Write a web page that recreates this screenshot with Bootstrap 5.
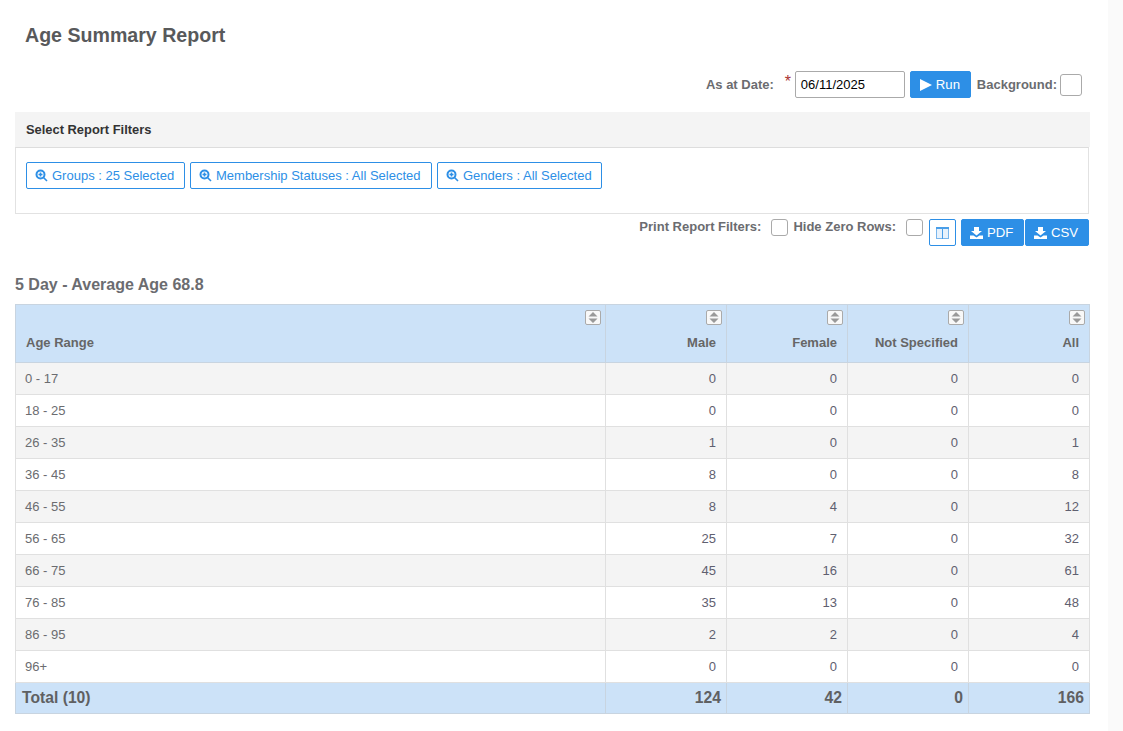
<!DOCTYPE html>
<html lang="en"><head><meta charset="utf-8"><title>Age Summary Report</title>
<link rel="stylesheet" href="https://cdn.jsdelivr.net/npm/bootstrap@5.3.0/dist/css/bootstrap.min.css">
<style>
html,body{height:731px;overflow:hidden}
body{font-family:"Liberation Sans",Arial,sans-serif;font-size:13px;color:#58595b;background:#fff}
.shell{width:1108px;height:731px;padding:0 18px 0 15px;box-sizing:border-box}
.track{width:15px;height:731px;background:#fafafa}
.page-title{font-size:19.6px;font-weight:700;color:#58595b;margin:0;padding:22px 0 0 10px;line-height:26px;height:71px}
.run-row{height:27px;padding-right:8px}
.lbl{font-size:13px;font-weight:700;color:#6b6c70;line-height:20px}
.req{color:#a33;font-size:16px;font-weight:400;margin:-6px 4px 0 11px;line-height:20px;width:6px}
.date-box{width:110px;height:27px;border:1px solid #aaa;border-radius:2px;padding:0 5px;font-size:13px;color:#000;line-height:25px}
.act{background:#2d8fe6;border:1px solid #2d8fe6;color:#fff;border-radius:2px;font-size:13.2px;height:27px;padding:0 8px;line-height:25px}
.act:hover{background:#2d8fe6;color:#fff;border-color:#2d8fe6}
.act svg{flex-shrink:0}
.box{width:22px;height:22px;border:1px solid #aaa;border-radius:3px;background:#fff;display:block}
.box.sm{width:17px;height:17px}
.filter-head{height:35px;margin-top:14px;background:#f4f4f4;font-weight:700;color:#333;line-height:35px;padding-left:11px;font-size:12.9px}
.filter-body{height:67px;width:1074px;border:1px solid #e2e2e2;border-top:1px solid #ddd;padding:14px 10px}
.chip{height:27px;border:1px solid #2d8fe6;border-radius:2px;background:#fff;color:#2d8fe6;font-size:13px;padding:0 0 0 8px;line-height:25px;white-space:nowrap;text-align:left}
.chip:hover{background:#fff;color:#2d8fe6;border-color:#2d8fe6}
.chip-a{width:159px}
.chip-b{width:242px}
.chip-c{width:165px}
.tool-row{height:33px;padding:5px 1px 0 0}
.tool-row .lbl{line-height:15px}
.col-btn{width:27px;height:27px;border:1px solid #2d8fe6;border-radius:2px;background:#fff;padding:0}
.sec-title{font-size:16px;font-weight:700;color:#6b6c70;margin:0;height:57px;padding-top:26px;line-height:24px}
.age-table{width:1074px;table-layout:fixed;border-collapse:collapse;margin:0;font-size:13px}
.age-table th,.age-table td{border:1px solid #e0e0e0;padding:0 10px 0 9px;text-align:right;color:#5f6070;font-weight:400;height:32px;box-shadow:none;vertical-align:middle}
.age-table td:first-child,.age-table th:first-child{text-align:left}
.age-table td:first-child{color:#6b6c70}
.age-table tbody tr:nth-child(odd) td{background:#f4f4f4}
.age-table tbody tr:nth-child(even) td{background:#fff}
.age-table thead th{background:#cce2f8;border-color:#c8d4e0;height:58px;position:relative;vertical-align:bottom;padding:0 10px 9px;font-weight:700;color:#666;font-size:13px;line-height:20px}
.age-table tfoot td{background:#cce2f8;border-color:#c8d4e0;height:31px;font-weight:700;font-size:15.7px;color:#5f6062;padding:0 5px 0 6px}
.age-table tfoot td:first-child{color:#5f6062}
.sorter{position:absolute;top:5px;right:4px;width:16px;height:15px;background:#f8f8f8;border:1px solid #aaa;border-radius:2px;display:flex;align-items:center;justify-content:center}
svg{display:block}
.ic{display:inline-block;vertical-align:-2px;margin-right:4px}
</style></head><body>
<div class="d-flex">
<main class="shell">
<h1 class="page-title">Age Summary Report</h1>
<div class="run-row d-flex justify-content-end align-items-center">
<span class="lbl">As at Date:</span><span class="req">*</span>
<div class="date-box">06/11/2025</div>
<button class="btn act d-flex align-items-center" type="button" style="width:61px;margin:0 6px 0 5px;padding-left:9px"><svg width="12" height="12" viewBox="0 0 11 11" style="margin-right:4px"><path d="M0 0 11 5.500 0 11z" fill="#fff"/></svg>Run</button>
<span class="lbl" style="margin-right:3px">Background:</span><span class="box"></span>
</div>
<div class="filter-head">Select Report Filters</div>
<div class="filter-body d-flex align-items-start">
<button class="btn chip chip-a" type="button" style="margin-right:5px"><svg class="ic" width="13" height="13" viewBox="0 0 13 13"><circle cx="5.500" cy="5.500" r="4" fill="none" stroke="#2d8fe6" stroke-width="2"/><path d="M8.500 8.500 12 12M3.500 5.500h4M5.500 3.500v4" stroke="#2d8fe6" stroke-width="1.600"/></svg>Groups : 25 Selected</button>
<button class="btn chip chip-b" type="button" style="margin-right:5px"><svg class="ic" width="13" height="13" viewBox="0 0 13 13"><circle cx="5.500" cy="5.500" r="4" fill="none" stroke="#2d8fe6" stroke-width="2"/><path d="M8.500 8.500 12 12M3.500 5.500h4M5.500 3.500v4" stroke="#2d8fe6" stroke-width="1.600"/></svg>Membership Statuses : All Selected</button>
<button class="btn chip chip-c" type="button"><svg class="ic" width="13" height="13" viewBox="0 0 13 13"><circle cx="5.500" cy="5.500" r="4" fill="none" stroke="#2d8fe6" stroke-width="2"/><path d="M8.500 8.500 12 12M3.500 5.500h4M5.500 3.500v4" stroke="#2d8fe6" stroke-width="1.600"/></svg>Genders : All Selected</button>
</div>
<div class="tool-row d-flex justify-content-end align-items-start">
<span class="lbl" style="margin-right:10px">Print Report Filters:</span><span class="box sm" style="margin-right:5px"></span>
<span class="lbl" style="margin-right:10px">Hide Zero Rows:</span><span class="box sm" style="margin-right:6px"></span>
<button class="btn col-btn d-flex align-items-center justify-content-center" type="button" aria-label="Columns"><svg width="13" height="12" viewBox="0 0 13 12"><rect x=".5" y=".5" width="12" height="11" fill="#e8f2fc" stroke="#7ab6ec"/><path d="M0 0h13v2H0z" fill="#4a9ee8"/><path d="M6.500 2v10" stroke="#4a9ee8"/></svg></button>
<button class="btn act d-flex align-items-center" type="button" style="width:63px;margin-left:5px"><svg width="13" height="12" viewBox="0 0 13 12" style="margin-right:4px"><path d="M4 0h5v4h3L6.500 8.500 1 4h3z" fill="#fff"/><path d="M0 8.500h3.500l3 2 3-2H13V12H0z" fill="#fff"/></svg>PDF</button>
<button class="btn act d-flex align-items-center" type="button" style="width:64px;margin-left:1px"><svg width="13" height="12" viewBox="0 0 13 12" style="margin-right:4px"><path d="M4 0h5v4h3L6.500 8.500 1 4h3z" fill="#fff"/><path d="M0 8.500h3.500l3 2 3-2H13V12H0z" fill="#fff"/></svg>CSV</button>
</div>
<h2 class="sec-title">5 Day - Average Age 68.8</h2>
<table class="table age-table">
<colgroup><col style="width:590px"><col style="width:121px"><col style="width:121px"><col style="width:121px"><col style="width:121px"></colgroup>
<thead><tr>
<th>Age Range<span class="sorter"><svg width="10" height="11" viewBox="0 0 10 11"><path d="M5 0 9.500 4.500H.5zM5 11 .5 6.500h9z" fill="#999"/></svg></span></th>
<th>Male<span class="sorter"><svg width="10" height="11" viewBox="0 0 10 11"><path d="M5 0 9.500 4.500H.5zM5 11 .5 6.500h9z" fill="#999"/></svg></span></th>
<th>Female<span class="sorter"><svg width="10" height="11" viewBox="0 0 10 11"><path d="M5 0 9.500 4.500H.5zM5 11 .5 6.500h9z" fill="#999"/></svg></span></th>
<th>Not Specified<span class="sorter"><svg width="10" height="11" viewBox="0 0 10 11"><path d="M5 0 9.500 4.500H.5zM5 11 .5 6.500h9z" fill="#999"/></svg></span></th>
<th>All<span class="sorter"><svg width="10" height="11" viewBox="0 0 10 11"><path d="M5 0 9.500 4.500H.5zM5 11 .5 6.500h9z" fill="#999"/></svg></span></th>
</tr></thead>
<tbody>
<tr><td>0 - 17</td><td>0</td><td>0</td><td>0</td><td>0</td></tr>
<tr><td>18 - 25</td><td>0</td><td>0</td><td>0</td><td>0</td></tr>
<tr><td>26 - 35</td><td>1</td><td>0</td><td>0</td><td>1</td></tr>
<tr><td>36 - 45</td><td>8</td><td>0</td><td>0</td><td>8</td></tr>
<tr><td>46 - 55</td><td>8</td><td>4</td><td>0</td><td>12</td></tr>
<tr><td>56 - 65</td><td>25</td><td>7</td><td>0</td><td>32</td></tr>
<tr><td>66 - 75</td><td>45</td><td>16</td><td>0</td><td>61</td></tr>
<tr><td>76 - 85</td><td>35</td><td>13</td><td>0</td><td>48</td></tr>
<tr><td>86 - 95</td><td>2</td><td>2</td><td>0</td><td>4</td></tr>
<tr><td>96+</td><td>0</td><td>0</td><td>0</td><td>0</td></tr>
</tbody>
<tfoot><tr><td>Total (10)</td><td>124</td><td>42</td><td>0</td><td>166</td></tr></tfoot>
</table>
</main>
<div class="track"></div>
</div>
</body></html>
